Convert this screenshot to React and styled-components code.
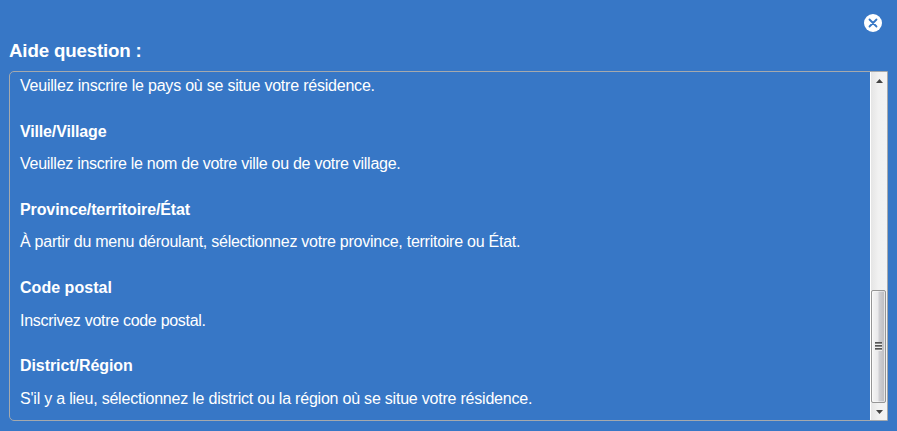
import React from "react";
import styled, { createGlobalStyle } from "styled-components";

const GlobalStyle = createGlobalStyle`
  * { box-sizing: border-box; }
  body { margin: 0; background: #3777c6; }
`;

const Dialog = styled.main`
  display: flex;
  flex-direction: column;
  width: 897px;
  height: 431px;
  padding: 14px 9px 10px;
  background: #3777c6;
  color: #fff;
  font: 16px "Liberation Sans", Arial, sans-serif;
`;

const TopBar = styled.div`
  display: flex;
  justify-content: flex-end;
  height: 18px;
  padding-right: 6px;
`;

const CloseButton = styled.button`
  width: 18px;
  height: 18px;
  padding: 0;
  border: 0;
  background: none;
  svg { display: block; }
`;

const Title = styled.h1`
  margin: 8px 0 10px;
  height: 21px;
  font-size: 18.72px;
  line-height: 21px;
  letter-spacing: -0.16px;
`;

const Panel = styled.section`
  display: flex;
  flex: 1;
  min-height: 0;
  border: 1px solid #a5a9ad;
  border-radius: 5px 0 0 5px;
`;

const Content = styled.div`
  flex: 1;
  padding: 5px 10px 0;
  overflow: hidden;
`;

const Heading = styled.h2`
  margin: 0;
  padding-top: 27.8px;
  height: 46px;
  font-size: 16px;
  line-height: 18px;
  letter-spacing: ${({ $tracking = 0 }) => $tracking}px;
`;

const Text = styled.p`
  margin: 0;
  height: ${({ $first }) => ($first ? "18px" : "32.2px")};
  padding-top: ${({ $first }) => ($first ? "0" : "14.2px")};
  line-height: 18px;
  white-space: nowrap;
  letter-spacing: ${({ $tracking = 0 }) => $tracking}px;
`;

const Scrollbar = styled.div`
  display: flex;
  flex-direction: column;
  width: 17px;
  border-left: 1px solid #fff;
  background: linear-gradient(90deg, #e5e5e5, #f1f1f1 45%, #f3f3f3);
`;

const ArrowButton = styled.div`
  display: flex;
  align-items: center;
  justify-content: center;
  height: 17px;
`;

const Track = styled.div`
  flex: 1;
  display: flex;
  align-items: flex-end;
`;

const Thumb = styled.div`
  display: flex;
  align-items: center;
  justify-content: center;
  width: 15px;
  height: 113px;
  border: 1px solid #959595;
  border-radius: 2px;
  background: linear-gradient(90deg, #f5f5f5, #e9e9eb 45%, #cfcfd3 55%, #c0c0c4 90%, #dedede);
  box-shadow: inset 0 0 0 1px rgba(255, 255, 255, 0.45);
`;

const entries = [
  { title: "Ville/Village", titleTracking: -0.15, text: "Veuillez inscrire le nom de votre ville ou de votre village.", tracking: -0.27 },
  { title: "Province/territoire/État", titleTracking: -0.1, text: "À partir du menu déroulant, sélectionnez votre province, territoire ou État.", tracking: -0.253 },
  { title: "Code postal", titleTracking: 0.03, text: "Inscrivez votre code postal.", tracking: -0.29 },
  { title: "District/Région", titleTracking: -0.07, text: "S'il y a lieu, sélectionnez le district ou la région où se situe votre résidence.", tracking: -0.215 },
];

export default function App() {
  return (
    <>
      <GlobalStyle />
      <Dialog>
        <TopBar>
          <CloseButton aria-label="Fermer">
            <svg width="18" height="18" viewBox="0 0 18 18">
              <circle cx="9" cy="9" r="9" fill="#fff" />
              <path d="M5.5 5.5 12.5 12.5M12.5 5.5 5.5 12.5" stroke="#3777c6" strokeWidth="1.8" strokeLinecap="round" />
            </svg>
          </CloseButton>
        </TopBar>
        <Title>Aide question :</Title>
        <Panel>
          <Content>
            <Text $first $tracking={-0.215}>Veuillez inscrire le pays où se situe votre résidence.</Text>
            {entries.map(({ title, titleTracking, text, tracking }) => (
              <React.Fragment key={title}>
                <Heading $tracking={titleTracking}>{title}</Heading>
                <Text $tracking={tracking}>{text}</Text>
              </React.Fragment>
            ))}
          </Content>
          <Scrollbar>
            <ArrowButton>
              <svg width="7" height="4" viewBox="0 0 7 4">
                <path d="M0 4 3.5 0 7 4Z" fill="#444" />
              </svg>
            </ArrowButton>
            <Track>
              <Thumb>
                <svg width="7" height="9" viewBox="0 0 7 9">
                  <path d="M0 1.5H7M0 4.5H7M0 7.5H7" stroke="#888" />
                  <path d="M0 .5H7M0 3.5H7M0 6.5H7" stroke="#555" />
                  <path d="M0 2.5H7M0 5.5H7M0 8.5H7" stroke="#eee" />
                </svg>
              </Thumb>
            </Track>
            <ArrowButton>
              <svg width="7" height="4" viewBox="0 0 7 4">
                <path d="M0 0 3.5 4 7 0Z" fill="#444" />
              </svg>
            </ArrowButton>
          </Scrollbar>
        </Panel>
      </Dialog>
    </>
  );
}
